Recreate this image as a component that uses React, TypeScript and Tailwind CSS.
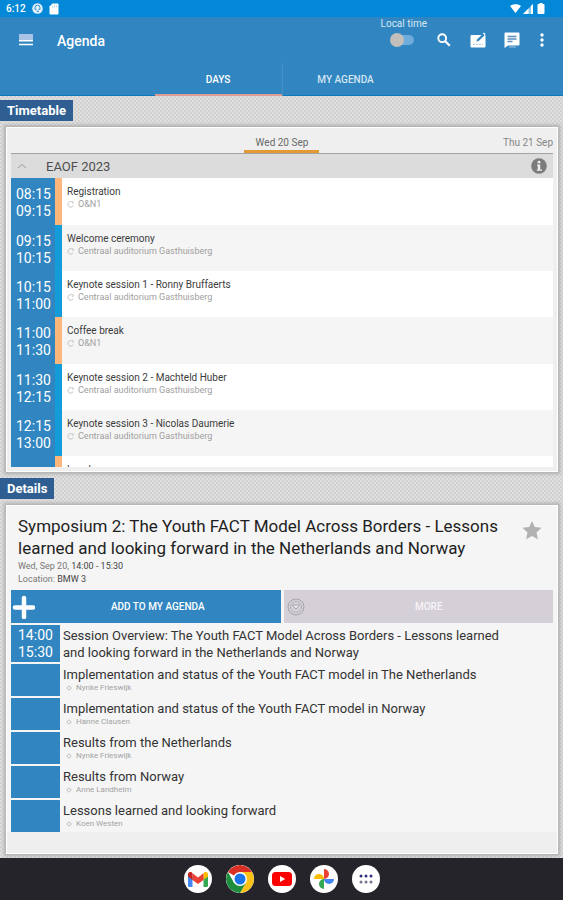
import React from "react";

interface Session {
    start?: string;
    end?: string;
    title: string;
    location?: string;
    pause?: boolean;
}

interface Talk {
    title: string;
    speaker: string;
}

const AUDITORIUM = "Centraal auditorium Gasthuisberg";

const sessions: Session[] = [
    { start: "08:15", end: "09:15", title: "Registration", location: "O&N1", pause: true },
    { start: "09:15", end: "10:15", title: "Welcome ceremony", location: AUDITORIUM },
    { start: "10:15", end: "11:00", title: "Keynote session 1 - Ronny Bruffaerts", location: AUDITORIUM },
    { start: "11:00", end: "11:30", title: "Coffee break", location: "O&N1", pause: true },
    { start: "11:30", end: "12:15", title: "Keynote session 2 - Machteld Huber", location: AUDITORIUM },
    { start: "12:15", end: "13:00", title: "Keynote session 3 - Nicolas Daumerie", location: AUDITORIUM },
    { title: "Lunch", pause: true },
];

const talks: Talk[] = [
    { title: "Implementation and status of the Youth FACT model in The Netherlands", speaker: "Nynke Frieswijk" },
    { title: "Implementation and status of the Youth FACT model in Norway", speaker: "Hanne Clausen" },
    { title: "Results from the Netherlands", speaker: "Nynke Frieswijk" },
    { title: "Results from Norway", speaker: "Anne Landheim" },
    { title: "Lessons learned and looking forward", speaker: "Koen Westen" },
];

const StatusBar = () => (
    <div className="flex h-[17px] items-center justify-between bg-[#0288d6] pl-1.5 pr-[18px] text-white">
        <div className="flex items-center gap-1.5">
            <span className="text-[10px] font-medium leading-3">6:12</span>
            <svg width="11" height="11" viewBox="0 0 22 22" fill="none">
                <circle cx="11" cy="11" r="10.5" fill="#e4f1fa" />
                <path d="M6 13V9.5a5 5 0 0 1 10 0V13M6 12.5h3M13 12.5h3M9 16.5h5" stroke="#2c8fd0" strokeWidth="2" />
            </svg>
            <svg width="10" height="12" viewBox="0 0 20 24" fill="#fff">
                <path d="M7 1h10a2 2 0 0 1 2 2v18a2 2 0 0 1-2 2H3a2 2 0 0 1-2-2V7z" />
                <path d="M7 5v4M11 4v5M15 4v5" stroke="#9fd0f0" strokeWidth="1.5" />
            </svg>
        </div>
        <div className="flex items-center gap-0.5">
            <svg width="11" height="9" viewBox="0 0 22 18" fill="#fff">
                <path d="M0 4C6-1 16-1 22 4L11 18z" />
            </svg>
            <svg width="10" height="10" viewBox="0 0 20 20" fill="#fff">
                <path d="M0 20 20 0v20z" opacity=".55" />
                <path d="M0 20 11 9v11zM16 4l4-4v20h-4z" />
            </svg>
            <svg className="ml-0.5" width="8" height="11" viewBox="0 0 16 22" fill="#fff">
                <path d="M5 0h6v2h2a2 2 0 0 1 2 2v16a2 2 0 0 1-2 2H3a2 2 0 0 1-2-2V4a2 2 0 0 1 2-2h2z" />
            </svg>
        </div>
    </div>
);

const AppBar = () => (
    <header className="bg-[#3186c1] text-white">
        <div className="flex h-[46px] items-center pl-[19px] pr-[18px]">
            <button aria-label="Menu">
                <svg width="14" height="12" viewBox="0 0 14 12">
                    <path d="M0 0h14v7H0z" fill="#a9c3e6" />
                    <path d="M0 6.8h14M0 10.5h14" stroke="#fff" strokeWidth="1.5" />
                </svg>
            </button>
            <h1 className="ml-6 grow pt-0.5 text-sm font-medium">Agenda</h1>
            <label className="flex flex-col items-center self-start pt-px text-[10px] leading-3 text-[#d5e6f3]">
                Local time
                <input
                    type="checkbox"
                    role="switch"
                    className="mt-[5px] h-[10px] w-5 appearance-none rounded-full bg-[#6fabdb] before:-mt-0.5 before:-ml-1 before:block before:size-3.5 before:rounded-full before:bg-[#c3bfba]"
                />
            </label>
            <button aria-label="Search" className="ml-2.5">
                <svg width="14" height="14" viewBox="0 0 14 14" fill="none" stroke="#fff">
                    <circle cx="5.2" cy="5.2" r="3.9" strokeWidth="1.9" />
                    <path d="m8.2 8.2 4.600 4.600" strokeWidth="2.2" />
                </svg>
            </button>
            <button aria-label="Notes" className="ml-[19px]">
                <svg width="16" height="16" viewBox="0 0 16 16">
                    <path d="M1.500 3h13a1 1 0 0 1 1 1v10.500a1 1 0 0 1-1 1h-13a1 1 0 0 1-1-1V4a1 1 0 0 1 1-1z" fill="#fff" />
                    <path d="M6.500 9.500 7 7.500 12.600 2 14.400 3.500 8.700 9z" fill="#3186c1" />
                    <path d="M12.800 1.600 14 .500l1.600 1.400-1.100 1.200z" fill="#fff" />
                    <path d="M3 12.500h10" stroke="#a9cbe6" strokeDasharray="2 1" />
                </svg>
            </button>
            <button aria-label="Messages" className="ml-[18px]">
                <svg width="16" height="16" viewBox="0 0 16 16">
                    <path d="M1.500.500h13a1 1 0 0 1 1 1v11a1 1 0 0 1-1 1H4L.500 16V1.500a1 1 0 0 1 1-1z" fill="#fff" />
                    <path d="M3.500 4.500h9M3.500 7h9M3.500 9.500h5" stroke="#5b8fbd" strokeWidth="1.300" />
                    <path d="M5 15h7" stroke="#9cc4e3" />
                </svg>
            </button>
            <button aria-label="More options" className="ml-[19px]">
                <svg width="6" height="14" viewBox="0 0 6 14" fill="#fff">
                    <circle cx="3" cy="2" r="1.700" />
                    <circle cx="3" cy="7" r="1.700" />
                    <circle cx="3" cy="12" r="1.700" />
                </svg>
            </button>
        </div>
        <nav className="flex h-[33px] justify-center border-b border-[#0f79bd] text-[10px] font-medium">
            <button className="h-[33px] w-[127px] border-b-2 border-[#dc9c93] pt-0.5">DAYS</button>
            <button className="h-[33px] w-[127px] border-l border-[#4791c7] text-[#d3e4f2]">MY AGENDA</button>
        </nav>
    </header>
);

const SectionLabel = ({ children }: { children: React.ReactNode }) => (
    <h2 className="w-fit bg-[#2f5f92] px-[7px] text-[13px] font-bold leading-[21px] text-white">{children}</h2>
);

const SessionRow = ({ session }: { session: Session }) => (
    <li className={`flex shrink-0 odd:bg-white even:bg-[#f5f5f5] ${session.pause ? "h-[47px]" : "h-[46px]"}`}>
        <div className="w-11 shrink-0 bg-[#3186c1] pt-2 pl-[5px] text-sm leading-[17px] text-white">
            <div>{session.start}</div>
            <div>{session.end}</div>
        </div>
        <div className={session.pause ? "w-[7px] shrink-0 bg-[#fdb67b]" : "w-[7px] shrink-0 bg-[#149bd9]"} />
        <div className="pt-[7px] pl-[5px]">
            <div className="text-[10px] leading-[13px] text-[#3c3c3c]">{session.title}</div>
            {session.location && (
                <div className="flex items-center gap-1 text-[9px] leading-3 text-[#a0a0a0]">
                    <svg width="7" height="7" viewBox="0 0 14 14" fill="none" stroke="#c4c4c4" strokeWidth="2">
                        <path d="M9 1.500A5.500 5.500 0 1 0 12.500 9M9 1l4 1-2 4" />
                    </svg>
                    {session.location}
                </div>
            )}
        </div>
    </li>
);

const Timetable = () => (
    <section className="mt-1.5 mr-[5px] ml-1.5 border border-white bg-[#efefef] px-1 pb-1 shadow-[0_0_3px_2px_#b0b0b0]">
        <div className="grid h-[26px] grid-cols-3 items-end border-b border-[#a3a3a3] text-[10px] text-[#686868]">
            <button className="col-start-2 w-[75px] justify-self-center border-b-[3px] border-[#e39a35] leading-[14px]">
                Wed 20 Sep
            </button>
            <button className="justify-self-end pb-[3px] leading-[14px] text-[#858585]">Thu 21 Sep</button>
        </div>
        <div className="flex h-6 items-center bg-[#dcdcdc] px-1.5">
            <button aria-label="Collapse">
                <svg width="10" height="6" viewBox="0 0 10 6" fill="none" stroke="#9a9a9a">
                    <path d="m1 5 4-3.500L9 5" />
                </svg>
            </button>
            <h3 className="ml-[19px] grow pt-px text-[13px] text-[#4e4e4e]">EAOF 2023</h3>
            <button aria-label="Information">
                <svg width="16" height="16" viewBox="0 0 16 16">
                    <circle cx="8" cy="8" r="7.800" fill="#7b7b7b" />
                    <circle cx="8" cy="4.200" r="1.400" fill="#eee" />
                    <path d="M6 6.500h3.200v5H11v1.300H5.800v-1.300h1V7.800H6z" fill="#eee" />
                </svg>
            </button>
        </div>
        <ul className="flex h-[289px] flex-col overflow-hidden">
            {sessions.map((session) => (
                <SessionRow key={session.title} session={session} />
            ))}
        </ul>
    </section>
);

const Details = () => (
    <section className="mt-1.5 mr-[5px] ml-1.5 border border-white bg-[#efefef] px-1 pb-[21px] shadow-[0_0_3px_2px_#b0b0b0]">
        <div className="-mx-1 bg-[#f5f5f5] px-1">
            <div className="flex items-start justify-between pt-[9px] pr-[11px] pb-1 pl-[7px]">
                <div>
                    <h3 className="text-[17px] leading-[22px] text-[#1e1e1e]">
                        Symposium 2: The Youth FACT Model Across Borders - Lessons learned and looking forward in the
                        Netherlands and Norway
                    </h3>
                    <p className="pt-px text-[9px] leading-[13px] text-[#777]">
                        Wed, Sep 20, <span className="text-[#444]">14:00 - 15:30</span>
                    </p>
                    <p className="text-[9px] leading-[13px] text-[#777]">
                        Location: <span className="text-[#444]">BMW 3</span>
                    </p>
                </div>
                <button aria-label="Add to favourites" className="mt-1.5 ml-4 shrink-0">
                    <svg width="20" height="19" viewBox="0 0 20 19" fill="#b1b1b1">
                        <path d="m10 0 2.800 6 6.700.800-5 4.600 1.400 6.900L10 15l-5.900 3.300 1.400-6.900-5-4.600L7.200 6z" />
                    </svg>
                </button>
            </div>
            <div className="grid grid-cols-2 gap-[3px] text-[10px] font-medium text-white">
                <button className="flex h-[33px] items-center bg-[#3186c1]">
                    <svg width="24" height="24" viewBox="0 0 24 24">
                        <path d="M13 3v19M4 12.500h18" stroke="#fff" strokeWidth="4.500" strokeLinecap="round" />
                    </svg>
                    <span className="grow">ADD TO MY AGENDA</span>
                </button>
                <button className="flex h-[33px] items-center bg-[#d5d0d8] pl-[3px] text-[#f6f4f7]">
                    <svg width="18" height="18" viewBox="0 0 18 18" fill="none" stroke="#a7a3aa">
                        <circle cx="9" cy="9" r="8" />
                        <circle cx="9" cy="9" r="5.500" strokeDasharray="2 1" />
                        <path d="m5.500 7 3.500 4 3.500-4z" fill="#eee" />
                    </svg>
                    <span className="grow">MORE</span>
                </button>
            </div>
            <ul className="flex flex-col gap-0.5 pt-0.5 text-[13px] leading-[17px] text-[#333]">
                <li className="flex h-[37px]">
                    <div className="w-[49px] shrink-0 bg-[#3186c1] pt-0.5 pl-[7px] text-sm leading-[17px] text-white">
                        <div>14:00</div>
                        <div>15:30</div>
                    </div>
                    <p className="max-w-[440px] pt-0.5 pl-[3px]">
                        Session Overview: The Youth FACT Model Across Borders - Lessons learned and looking forward in
                        the Netherlands and Norway
                    </p>
                </li>
                {talks.map((talk) => (
                    <li key={talk.title} className="flex h-8">
                        <div className="w-[49px] shrink-0 bg-[#3186c1]" />
                        <div className="pt-0.5 pl-[3px]">
                            <div>{talk.title}</div>
                            <div className="flex items-center gap-1 pl-[3px] text-[8px] leading-[10px] text-[#a3a3a3]">
                                <svg width="6" height="6" viewBox="0 0 12 12" fill="none" stroke="#bdbdbd" strokeWidth="2">
                                    <path d="m6 1.500 4.500 4.500L6 10.500 1.500 6z" />
                                </svg>
                                {talk.speaker}
                            </div>
                        </div>
                    </li>
                ))}
            </ul>
        </div>
    </section>
);

const DockButton = ({ label, children }: { label: string; children: React.ReactNode }) => (
    <button aria-label={label} className="flex size-7 items-center justify-center overflow-hidden rounded-full bg-white">
        {children}
    </button>
);

const Dock = () => (
    <nav className="mt-auto flex h-[42px] items-center justify-center gap-3.5 bg-[#24242a]">
        <DockButton label="Gmail">
            <svg width="20" height="15" viewBox="0 0 20 15">
                <path d="M0 2v11.500A1.500 1.500 0 0 0 1.500 15H4.500V5z" fill="#4285f4" />
                <path d="M20 2v11.500a1.500 1.500 0 0 1-1.500 1.500h-3V5z" fill="#34a853" />
                <path d="M15.500 1.300V8L20 4.500V2.200C20 .200 17.500-.700 16 .500z" fill="#fbbc04" />
                <path d="M4.500 8V1.300L10 5.500l5.500-4.200V8L10 12z" fill="#ea4335" />
                <path d="M0 2.200v2.300L4.500 8V1.300L4 .500C2.500-.700 0 .200 0 2.200z" fill="#c5221f" />
            </svg>
        </DockButton>
        <DockButton label="Chrome">
            <svg width="28" height="28" viewBox="0 0 28 28">
                <path d="M14 14 1.900 7A14 14 0 0 1 26.100 7z" fill="#d93025" />
                <path d="M14 7h12.100A14 14 0 0 1 14 28l6.100-10.500z" fill="#fbc116" />
                <path d="M1.900 7A14 14 0 0 0 14 28l6.100-10.500H7.900z" fill="#1e8e3e" />
                <circle cx="14" cy="14" r="7" fill="#fff" />
                <circle cx="14" cy="14" r="5.500" fill="#1a73e8" />
            </svg>
        </DockButton>
        <DockButton label="YouTube">
            <svg width="20" height="14" viewBox="0 0 20 14">
                <rect width="20" height="14" rx="3.500" fill="#f00" />
                <path d="m8 4 5.200 3L8 10z" fill="#fff" />
            </svg>
        </DockButton>
        <DockButton label="Photos">
            <svg width="20" height="20" viewBox="0 0 20 20">
                <path d="M10 0a5 5 0 0 1 0 10z" fill="#ea4335" />
                <path d="M20 10a5 5 0 0 1-10 0z" fill="#4285f4" />
                <path d="M10 20a5 5 0 0 1 0-10z" fill="#34a853" />
                <path d="M0 10a5 5 0 0 1 10 0z" fill="#fbbc04" />
            </svg>
        </DockButton>
        <DockButton label="All apps">
            <svg width="14" height="10" viewBox="0 0 14 10">
                <g fill="#35307e">
                    <circle cx="2" cy="2" r="1.500" />
                    <circle cx="7" cy="2" r="1.500" />
                    <circle cx="12" cy="2" r="1.500" />
                </g>
                <g fill="#77758f">
                    <circle cx="2" cy="8" r="1.500" />
                    <circle cx="7" cy="8" r="1.500" />
                    <circle cx="12" cy="8" r="1.500" />
                </g>
            </svg>
        </DockButton>
    </nav>
);

const App = () => {
    return (
        <div className="flex min-h-screen flex-col bg-[#dcdcdc] bg-[repeating-conic-gradient(#d1d1d1_0_25%,#dfdfdf_0_50%)] bg-[length:4px_4px] font-[Roboto,sans-serif]">
            <StatusBar />
            <AppBar />
            <main className="pt-1 pb-1">
                <SectionLabel>Timetable</SectionLabel>
                <Timetable />
                <div className="h-1.5" />
                <SectionLabel>Details</SectionLabel>
                <Details />
            </main>
            <Dock />
        </div>
    );
};

export default App;
